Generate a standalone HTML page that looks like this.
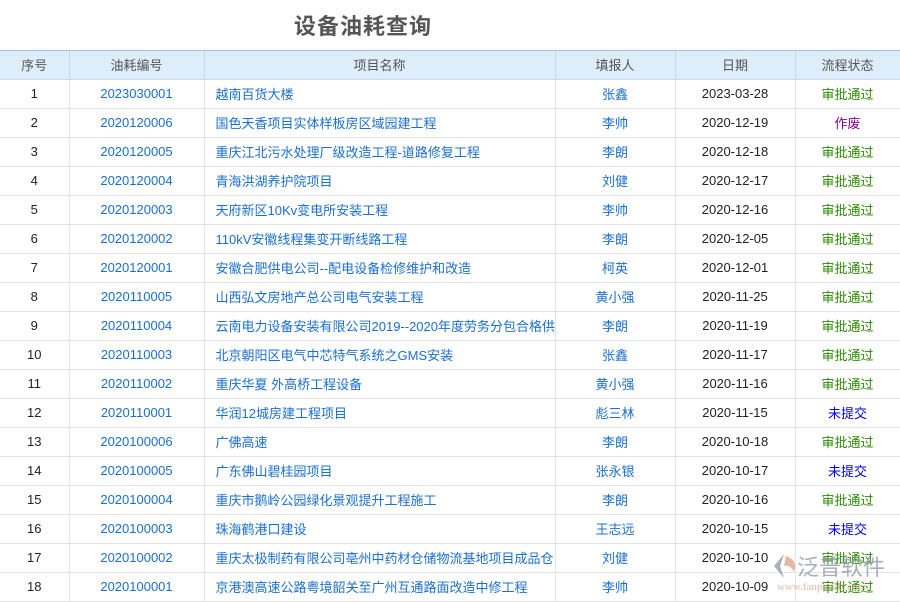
<!DOCTYPE html>
<html><head><meta charset="utf-8"><style>
*{margin:0;padding:0;box-sizing:border-box}
body{width:900px;height:600px;overflow:hidden;background:#fff;font-family:"Liberation Sans","Noto Sans CJK SC",sans-serif;font-size:13px;position:relative}
h1{position:absolute;left:0;width:726px;top:9px;text-align:center;font-size:22px;color:#555;font-weight:bold;letter-spacing:1px}
table{position:absolute;top:50px;left:0;width:900px;border-collapse:collapse;table-layout:fixed}
th{height:29px;background:#ddeefa;color:#555;font-weight:normal;border-top:1px solid #9cc2e5;border-bottom:1px solid #c8dcef;border-right:1px solid #c2d8ee;padding-bottom:2px}
td{height:29px;border-bottom:1px solid #e3e3e3;border-right:1px solid #e3e3e3;text-align:center;color:#222;white-space:nowrap;overflow:hidden;padding-bottom:2px}
td.n{text-align:left;padding-left:11px;color:#1a6fd0}
td.b{color:#1a6fd0}
.g{color:#2a8a00}.p{color:#8a008a}.u{color:#0000ee}
.wm{position:absolute;left:770px;top:547px;width:130px;height:53px;opacity:.75}
</style></head><body>
<h1>设备油耗查询</h1>
<table>
<colgroup><col style="width:69px"><col style="width:135px"><col style="width:351px"><col style="width:120px"><col style="width:120px"><col style="width:105px"></colgroup>
<tr><th>序号</th><th>油耗编号</th><th>项目名称</th><th>填报人</th><th>日期</th><th>流程状态</th></tr>
<tr><td>1</td><td class="b">2023030001</td><td class="n">越南百货大楼</td><td class="b">张鑫</td><td>2023-03-28</td><td class="g">审批通过</td></tr>
<tr><td>2</td><td class="b">2020120006</td><td class="n">国色天香项目实体样板房区域园建工程</td><td class="b">李帅</td><td>2020-12-19</td><td class="p">作废</td></tr>
<tr><td>3</td><td class="b">2020120005</td><td class="n">重庆江北污水处理厂级改造工程-道路修复工程</td><td class="b">李朗</td><td>2020-12-18</td><td class="g">审批通过</td></tr>
<tr><td>4</td><td class="b">2020120004</td><td class="n">青海洪湖养护院项目</td><td class="b">刘健</td><td>2020-12-17</td><td class="g">审批通过</td></tr>
<tr><td>5</td><td class="b">2020120003</td><td class="n">天府新区10Kv变电所安装工程</td><td class="b">李帅</td><td>2020-12-16</td><td class="g">审批通过</td></tr>
<tr><td>6</td><td class="b">2020120002</td><td class="n">110kV安徽线程集变开断线路工程</td><td class="b">李朗</td><td>2020-12-05</td><td class="g">审批通过</td></tr>
<tr><td>7</td><td class="b">2020120001</td><td class="n">安徽合肥供电公司--配电设备检修维护和改造</td><td class="b">柯英</td><td>2020-12-01</td><td class="g">审批通过</td></tr>
<tr><td>8</td><td class="b">2020110005</td><td class="n">山西弘文房地产总公司电气安装工程</td><td class="b">黄小强</td><td>2020-11-25</td><td class="g">审批通过</td></tr>
<tr><td>9</td><td class="b">2020110004</td><td class="n">云南电力设备安装有限公司2019--2020年度劳务分包合格供</td><td class="b">李朗</td><td>2020-11-19</td><td class="g">审批通过</td></tr>
<tr><td>10</td><td class="b">2020110003</td><td class="n">北京朝阳区电气中芯特气系统之GMS安装</td><td class="b">张鑫</td><td>2020-11-17</td><td class="g">审批通过</td></tr>
<tr><td>11</td><td class="b">2020110002</td><td class="n">重庆华夏 外高桥工程设备</td><td class="b">黄小强</td><td>2020-11-16</td><td class="g">审批通过</td></tr>
<tr><td>12</td><td class="b">2020110001</td><td class="n">华润12城房建工程项目</td><td class="b">彪三林</td><td>2020-11-15</td><td class="u">未提交</td></tr>
<tr><td>13</td><td class="b">2020100006</td><td class="n">广佛高速</td><td class="b">李朗</td><td>2020-10-18</td><td class="g">审批通过</td></tr>
<tr><td>14</td><td class="b">2020100005</td><td class="n">广东佛山碧桂园项目</td><td class="b">张永银</td><td>2020-10-17</td><td class="u">未提交</td></tr>
<tr><td>15</td><td class="b">2020100004</td><td class="n">重庆市鹅岭公园绿化景观提升工程施工</td><td class="b">李朗</td><td>2020-10-16</td><td class="g">审批通过</td></tr>
<tr><td>16</td><td class="b">2020100003</td><td class="n">珠海鹤港口建设</td><td class="b">王志远</td><td>2020-10-15</td><td class="u">未提交</td></tr>
<tr><td>17</td><td class="b">2020100002</td><td class="n">重庆太极制药有限公司亳州中药材仓储物流基地项目成品仓</td><td class="b">刘健</td><td>2020-10-10</td><td class="g">审批通过</td></tr>
<tr><td>18</td><td class="b">2020100001</td><td class="n">京港澳高速公路粤境韶关至广州互通路面改造中修工程</td><td class="b">李帅</td><td>2020-10-09</td><td class="g">审批通过</td></tr>
</table>
<div class="wm">
<svg width="30" height="30" style="position:absolute;left:0;top:5px" viewBox="0 0 30 30"><path d="M14 2 L4 14 L14 26 L10 14 Z" fill="#8a94a8"/><path d="M16 4 Q28 8 24 20 Q20 12 14 14 Z" fill="#e0a080"/></svg>
<div style="position:absolute;left:27px;top:3px;font-size:22px;color:#8a94a8;white-space:nowrap">泛普软件</div>
<div style="position:absolute;left:7px;top:34px;font-size:11px;color:#e0a080;font-family:'Liberation Serif',serif;white-space:nowrap">www.fanpusoft.com</div>
</div>
</body></html>
